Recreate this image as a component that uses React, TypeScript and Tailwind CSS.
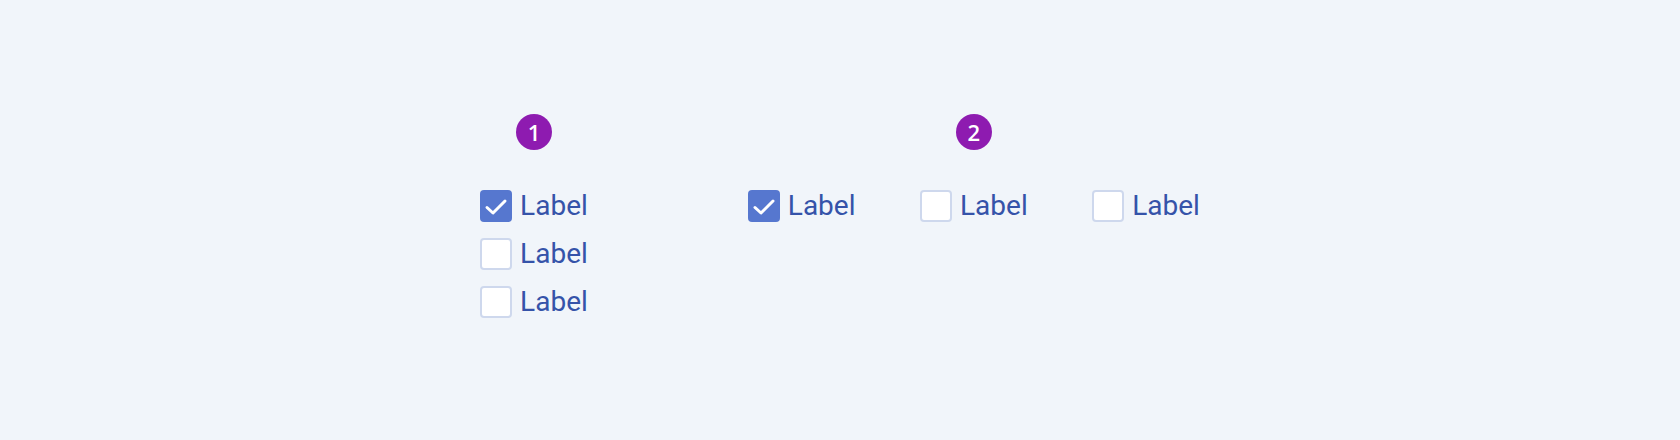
import React from "react";

function Check({ checked }: { checked?: boolean }) {
  if (checked) {
    return (
      <div className="w-8 h-8 rounded-[4px] bg-[#5677cf] flex items-center justify-center shrink-0">
        <svg width="32" height="32" viewBox="0 0 32 32" fill="none">
          <path d="M7 17.5L13 23L25 11" stroke="#ffffff" strokeWidth="3" strokeLinecap="round" strokeLinejoin="round" />
        </svg>
      </div>
    );
  }
  return <div className="w-8 h-8 rounded-[4px] bg-white border-2 border-[#ced8ed] shrink-0" />;
}

function Item({ checked }: { checked?: boolean }) {
  return (
    <div className="flex items-center gap-2 h-8">
      <Check checked={checked} />
      <span className="text-[28px] leading-8 text-[#3553a9]" style={{ fontFamily: "Roboto, sans-serif" }}>
        Label
      </span>
    </div>
  );
}

function Badge({ n }: { n: string }) {
  return (
    <div
      className="w-9 h-9 rounded-full bg-[#8e1bb0] text-white flex items-center justify-center text-[22px] font-semibold"
      style={{ fontFamily: "'Open Sans', sans-serif" }}
    >
      {n}
    </div>
  );
}

export default function App() {
  return (
    <div className="w-[1680px] h-[440px] bg-[#f1f5fa] flex justify-center items-start pt-[114px] gap-[160px]">
      <div className="flex flex-col items-center gap-10">
        <Badge n="1" />
        <div className="flex flex-col gap-4">
          <Item checked />
          <Item />
          <Item />
        </div>
      </div>
      <div className="flex flex-col items-center gap-10">
        <Badge n="2" />
        <div className="flex gap-[64.5px]">
          <Item checked />
          <Item />
          <Item />
        </div>
      </div>
    </div>
  );
}
